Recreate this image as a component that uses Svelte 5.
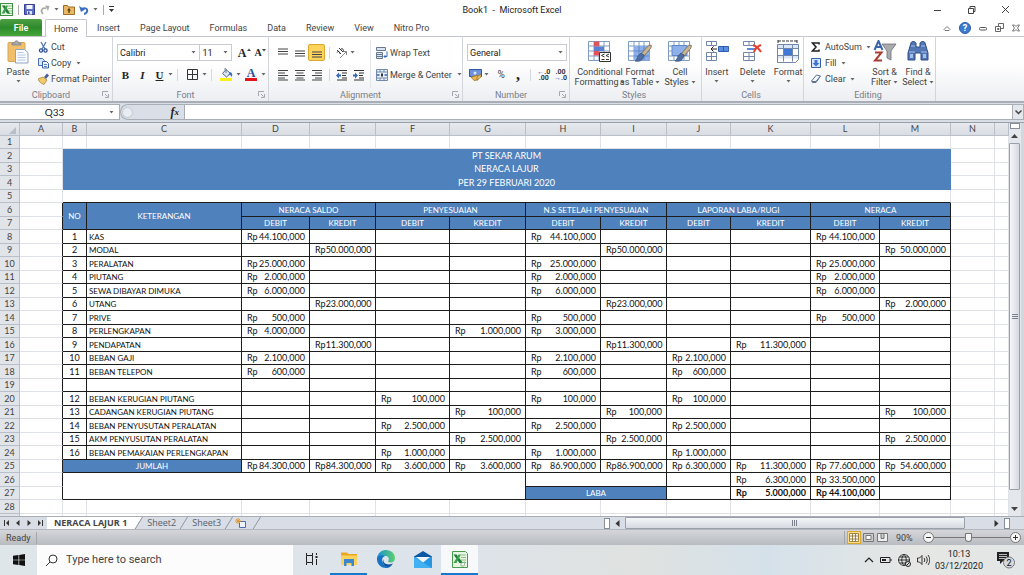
<script>
  const tabs = ['Insert', 'Page Layout', 'Formulas', 'Data', 'Review', 'View', 'Nitro Pro'];
  const letters = ['A', 'B', 'C', 'D', 'E', 'F', 'G', 'H', 'I', 'J', 'K', 'L', 'M', 'N', ''];
  const widths = [20, 43, 24, 155, 68, 66, 74, 76, 75, 66, 64, 80, 69, 71, 44];
  const groups = ['NERACA SALDO', 'PENYESUAIAN', 'N.S SETELAH PENYESUAIAN', 'LAPORAN LABA/RUGI', 'NERACA'];
  const titles = ['PT SEKAR ARUM', 'NERACA LAJUR', 'PER 29 FEBRUARI 2020'];
  const cols = ['D', 'E', 'F', 'G', 'H', 'I', 'J', 'K', 'L', 'M'];

  const entries = [
    { row: 8, no: 1, name: 'KAS', D: '44.100,000', H: '44.100,000', L: '44.100,000' },
    { row: 9, no: 2, name: 'MODAL', E: '50.000,000', I: '50.000,000', M: '50.000,000' },
    { row: 10, no: 3, name: 'PERALATAN', D: '25.000,000', H: '25.000,000', L: '25.000,000' },
    { row: 11, no: 4, name: 'PIUTANG', D: '2.000,000', H: '2.000,000', L: '2.000,000' },
    { row: 12, no: 5, name: 'SEWA DIBAYAR DIMUKA', D: '6.000,000', H: '6.000,000', L: '6.000,000' },
    { row: 13, no: 6, name: 'UTANG', E: '23.000,000', I: '23.000,000', M: '2.000,000' },
    { row: 14, no: 7, name: 'PRIVE', D: '500,000', H: '500,000', L: '500,000' },
    { row: 15, no: 8, name: 'PERLENGKAPAN', D: '4.000,000', G: '1.000,000', H: '3.000,000' },
    { row: 16, no: 9, name: 'PENDAPATAN', E: '11.300,000', I: '11.300,000', K: '11.300,000' },
    { row: 17, no: 10, name: 'BEBAN GAJI', D: '2.100,000', H: '2.100,000', J: '2.100,000' },
    { row: 18, no: 11, name: 'BEBAN TELEPON', D: '600,000', H: '600,000', J: '600,000' },
    { row: 19, no: '', name: '' },
    { row: 20, no: 12, name: 'BEBAN KERUGIAN PIUTANG', F: '100,000', H: '100,000', J: '100,000' },
    { row: 21, no: 13, name: 'CADANGAN KERUGIAN PIUTANG', G: '100,000', I: '100,000', M: '100,000' },
    { row: 22, no: 14, name: 'BEBAN PENYUSUTAN PERALATAN', F: '2.500,000', H: '2.500,000', J: '2.500,000' },
    { row: 23, no: 15, name: 'AKM PENYUSUTAN PERALATAN', G: '2.500,000', I: '2.500,000', M: '2.500,000' },
    { row: 24, no: 16, name: 'BEBAN PEMAKAIAN PERLENGKAPAN', F: '1.000,000', H: '1.000,000', J: '1.000,000' }
  ];
  const totals = {
    D: '84.300,000', E: '84.300,000', F: '3.600,000', G: '3.600,000', H: '86.900,000',
    I: '86.900,000', J: '6.300,000', K: '11.300,000', L: '77.600,000', M: '54.600,000'
  };
  const profit = { K: '6.300,000', L: '33.500,000' };
  const closing = { K: '5.000,000', L: '44.100,000' };

  let cellName = $state('Q33');
  let zoom = $state(45);
</script>

{#snippet arrow()}
  <svg class="arrow" width="5" height="3" viewBox="0 0 5 3" aria-hidden="true"><path d="M.5 0h4L2.500 2.500z" fill="#666" /></svg>
{/snippet}

{#snippet launcher()}
  <svg class="launcher" width="7" height="7" viewBox="0 0 7 7" aria-hidden="true"><path d="M.5 5V.5H6M3 3l2.500 2.500M6.500 3v3.500H3" fill="none" stroke="#a3a8b0" /></svg>
{/snippet}

{#snippet money(value)}
  {#if value}<div class="money"><span>Rp</span><span>{value}</span></div>{/if}
{/snippet}

{#snippet gridIcon()}
  <path d="M.5 1.500h21v19H.5z" fill="#fff" stroke="#7f9cc0" /><path d="M.5 6h21M.5 11h21M.5 16h21M6 1.500v19M11 1.500v19M16 1.500v19" stroke="#7f9cc0" fill="none" />
{/snippet}

{#snippet brush()}
  <path d="M23 5c1 1 0 2 0 3l-7 8-3-2 7-8z" fill="#c9b492" stroke="#6f5f49" stroke-width=".7" /><path d="M16 15l-3-2-3 3c-1 2-1 4-3 5 4 1 8 0 9-6z" fill="#4f6fa3" stroke="#2c4677" stroke-width=".6" />
{/snippet}

{#snippet bars(rows)}
  <svg width="12" height="12" viewBox="0 0 12 12" aria-hidden="true"><path d={rows} stroke="#444" stroke-width="1.200" fill="none" /></svg>
{/snippet}

<div class="app">
  <header class="title">
    <div class="quick">
      <svg width="13" height="13" viewBox="0 0 13 13"><rect x=".5" y=".5" width="12" height="12" fill="#eef7ea" stroke="#3f9142" /><path d="M8 3h4M8 5.500h4M8 8h4M8 10.500h4" stroke="#8bbf7d" /><path d="M2 2.500h3L10 10.500H7z" fill="#1f7a35" /><path d="M8 2.500H6L1.500 10.500h3z" fill="#3aa04d" /></svg>
      <i class="bar"></i>
      <button aria-label="Save"><svg width="11" height="11" viewBox="0 0 11 11"><path d="M.5.5h10v10h-10z" fill="#5b6fc4" stroke="#353f94" /><path d="M2.500 1h6v4h-6z" fill="#f4f7ff" /><path d="M3 7h5v3.500H3z" fill="#dde4f5" /><path d="M4 7.500h1.500v2.500H4z" fill="#353f94" /></svg></button>
      <button class="redo" aria-label="Redo"><svg width="10" height="10" viewBox="0 0 10 10"><path d="M3 9C0 6 2 2 6 3.500" fill="none" stroke="#aaa" stroke-width="1.800" /><path d="M5 0.500L9.500 1 8 6z" fill="#aaa" /></svg>{@render arrow()}</button>
      <button aria-label="Open"><svg width="12" height="11" viewBox="0 0 12 11"><path d="M.5 1.500h4l1 1.500h6v7.500H.5z" fill="#e9b864" stroke="#9b6c22" /><path d="M6 4l2 2.500H6.700V9H5.300V6.500H4z" fill="#5b3d10" /></svg></button>
      <button class="undo" aria-label="Undo"><svg width="10" height="10" viewBox="0 0 10 10"><path d="M5 9C10 8 9 1 3 4" fill="none" stroke="#3d6fc0" stroke-width="2" /><path d="M0 1l2 6 4-2.500z" fill="#3d6fc0" /></svg>{@render arrow()}</button>
      <i class="bar"></i>
      <svg width="5" height="7" viewBox="0 0 5 7"><path d="M0 .5h5" stroke="#333" /><path d="M0 3h5L2.500 6z" fill="#333" /></svg>
    </div>
    <h1>Book1 &nbsp;-&nbsp; Microsoft Excel</h1>
    <div class="window">
      <button aria-label="Minimize"><svg width="9" height="9" viewBox="0 0 9 9"><path d="M1 5.500h7" stroke="#444" /></svg></button>
      <button aria-label="Restore"><svg width="9" height="9" viewBox="0 0 9 9"><path d="M1.500 3.500h5v5h-5zM3 3.500v-2h5v5H6.500" fill="none" stroke="#444" /></svg></button>
      <button aria-label="Close"><svg width="9" height="9" viewBox="0 0 9 9"><path d="M1 1l7 7M8 1L1 8" stroke="#444" fill="none" /></svg></button>
    </div>
  </header>

  <nav class="tabs">
    <button class="file">File</button>
    <button class="home">Home</button>
    {#each tabs as tab}<button>{tab}</button>{/each}
    <div class="help">
      <svg width="8" height="8" viewBox="0 0 8 8"><path d="M1 5.500L4 2.500l3 3-1 1H2z" fill="#fff" stroke="#555" stroke-width=".8" /></svg>
      <button class="question" aria-label="Help">?</button>
      <svg width="8" height="8" viewBox="0 0 8 8"><rect x=".5" y="3.500" width="7" height="2.500" rx="1" fill="#fff" stroke="#555" /></svg>
      <svg width="9" height="9" viewBox="0 0 9 9"><path d="M3.500 4V.5h5v5H6M.5 3.500h5v5h-5zM2.500 5.500h1.500v1H2.500z" fill="none" stroke="#666" /></svg>
      <svg width="8" height="8" viewBox="0 0 8 8"><path d="M.5 1h2L4 2.500 5.500 1h2L5.500 4l2 3h-2L4 5.500 2.500 7h-2l2-3z" fill="#fff" stroke="#555" stroke-width=".8" /></svg>
    </div>
  </nav>

  <section class="ribbon">
    <div class="group">
      <div class="body">
        <button class="big"><svg width="22" height="24" viewBox="0 0 22 24"><rect x="1" y="2.500" width="17" height="19" rx="1" fill="#efbf6c" stroke="#d9a552" /><path d="M5 5V3h2.500c0-3 4-3 4 0H14v2z" fill="#a5a8ae" stroke="#7b7f86" stroke-width=".7" /><path d="M8.500 9.500h9l3.500 3v10.500H8.500z" fill="#f8fbff" stroke="#8fa4c2" /><path d="M10.500 12.500h6M10.500 15h8M10.500 17.500h8M10.500 20h8" stroke="#b9c8df" /></svg><span>Paste</span>{@render arrow()}</button>
        <div class="stack">
          <button><svg width="11" height="12" viewBox="0 0 11 12"><path d="M3 1l4 7M8 1L4 8" stroke="#5379b4" stroke-width="1.300" /><circle cx="3" cy="9.500" r="1.600" fill="none" stroke="#2c4f94" stroke-width="1.300" /><circle cx="7.500" cy="9.500" r="1.600" fill="none" stroke="#2c4f94" stroke-width="1.300" /></svg>Cut</button>
          <button><svg width="11" height="12" viewBox="0 0 11 12"><path d="M.5 1.500h4l2 2v5h-6z" fill="#dbe7fa" stroke="#4a71b4" /><path d="M4.500 4.500h4l2 2v4.500h-6z" fill="#eef4ff" stroke="#3860a8" /><path d="M6 7.500h3M6 9.500h3" stroke="#5b83c8" /></svg>Copy{@render arrow()}</button>
          <button><svg width="11" height="12" viewBox="0 0 11 12"><path d="M6 4l3-3.500 2 2L8 6z" fill="#4d5d99" /><path d="M0 6l5-2 4 3-3 4.500C4 11 1 9 0 6z" fill="#f0ca6b" stroke="#a67d2a" stroke-width=".7" /></svg>Format Painter</button>
        </div>
      </div>
      <footer><span>Clipboard</span>{@render launcher()}</footer>
    </div>

    <div class="group">
      <div class="body rows">
        <div class="line">
          <label class="pick font"><select aria-label="Font"><option>Calibri</option></select>{@render arrow()}</label>
          <label class="pick size"><select aria-label="Font size"><option>11</option></select>{@render arrow()}</label>
          <button class="serif grow" aria-label="Grow font">A<svg width="4" height="10" viewBox="0 0 4 10"><path d="M0 3l2-2.500L4 3z" fill="#444" /></svg></button>
          <button class="serif shrink" aria-label="Shrink font">A<svg width="4" height="10" viewBox="0 0 4 10"><path d="M0 1l2 2.500L4 1z" fill="#444" /></svg></button>
        </div>
        <div class="line second">
          <button class="serif mark">B</button><button class="serif mark it">I</button><button class="serif mark un">U</button>{@render arrow()}
          <i class="bar"></i>
          <button class="slot" aria-label="Borders"><svg width="11" height="11" viewBox="0 0 11 11"><path d="M.5.5h10v10h-10zM5.500.5v10M.5 5.500h10" fill="none" stroke="#333" /></svg></button>{@render arrow()}
          <i class="bar"></i>
          <button class="slot" aria-label="Fill color"><svg width="13" height="13" viewBox="0 0 13 13"><path d="M2.500 5.500L6 1.500l4.500 4-4 3.500z" fill="#dfe7f3" stroke="#53688b" /><path d="M6 5V1.500C6 0 4.500 0 4.500 1.500" fill="none" stroke="#53688b" stroke-width=".8" /><path d="M10 4c3 1 2.500 4 1.500 5C11 7 10 7 8.500 7z" fill="#3a6fc4" /><path d="M0 10h12v3H0z" fill="#f7ee1c" /></svg></button>{@render arrow()}
          <button class="slot serif color" aria-label="Font color"><span>A</span></button>{@render arrow()}
        </div>
      </div>
      <footer><span>Font</span>{@render launcher()}</footer>
    </div>

    <div class="group">
      <div class="body align">
        <div class="rows">
          <div class="line">
            <button class="cell" aria-label="Top align">{@render bars('M1 2h10M1 4.500h10M1 7h10')}</button>
            <button class="cell" aria-label="Middle align">{@render bars('M1 4h10M1 6.500h10M1 9h10')}</button>
            <button class="cell on" aria-label="Bottom align">{@render bars('M1 5h10M1 7.500h10M1 10h10')}</button>
            <i class="bar"></i>
            <button class="cell" aria-label="Orientation"><svg width="12" height="12" viewBox="0 0 12 12"><path d="M4 11l6-6M7 4.500h3.500V8" fill="none" stroke="#888" /><path d="M1 3l4 4M3 1l4 4M1 5.500c1-2 3-1 2.500 1M5 2c2-1 3 1 2 2.500" fill="none" stroke="#333" /></svg></button>{@render arrow()}
          </div>
          <div class="line second">
            <button class="cell" aria-label="Align left">{@render bars('M1 1.500h10M1 4h7M1 6.500h10M1 9h7M1 11h10')}</button>
            <button class="cell" aria-label="Center">{@render bars('M1 1.500h10M2.500 4h7M1 6.500h10M2.500 9h7M1 11h10')}</button>
            <button class="cell" aria-label="Align right">{@render bars('M1 1.500h10M4 4h7M1 6.500h10M4 9h7M1 11h10')}</button>
            <i class="bar"></i>
            <button class="cell" aria-label="Decrease indent"><svg width="12" height="12" viewBox="0 0 12 12"><path d="M1 1.500h10M6 4h5M6 6.500h4M6 9h5M1 11h10" stroke="#333" /><path d="M0 6.500l3-3v2h2v2H3v2z" fill="#3569b8" /></svg></button>
            <button class="cell" aria-label="Increase indent"><svg width="12" height="12" viewBox="0 0 12 12"><path d="M1 1.500h10M6 4h5M6 6.500h4M6 9h5M1 11h10" stroke="#333" /><path d="M5 6.500l-3-3v2H0v2h2v2z" fill="#3569b8" /></svg></button>
          </div>
        </div>
        <div class="rows wide">
          <div class="line"><button><svg width="12" height="12" viewBox="0 0 12 12"><path d="M.5.5h9v3h-9zM.5 5.500h6v6h-6z" fill="#dbe5f2" stroke="#66788f" /><path d="M1 7.500h5M1 9.500h5" stroke="#66788f" /><path d="M8 9.500h3v-5M9.500 8L8 9.500 9.500 11" fill="none" stroke="#3569b8" /></svg>Wrap Text</button></div>
          <div class="line second"><button><svg width="12" height="12" viewBox="0 0 12 12"><path d="M.5.5h11v11H.5zM.5 3h11M.5 9h11M4 .5V3M8 .5V3M4 9v2.500M8 9v2.500" fill="#eaf1fb" stroke="#7089ab" /><path d="M1 6h2.500M8.500 6H11" stroke="#2e62b5" stroke-width="1.500" /><path d="M5 4.500h2v3H5z" fill="#333" /></svg>Merge &amp; Center{@render arrow()}</button></div>
        </div>
      </div>
      <footer><span>Alignment</span>{@render launcher()}</footer>
    </div>

    <div class="group">
      <div class="body rows">
        <div class="line"><label class="pick number"><select aria-label="Number format"><option>General</option></select>{@render arrow()}</label></div>
        <div class="line second">
          <button class="cell" aria-label="Currency"><svg width="13" height="12" viewBox="0 0 13 12"><path d="M.5 .5h12v7H.5z" fill="#6f93da" stroke="#2f57a5" /><circle cx="6" cy="4" r="1.500" fill="#dce6fa" /><path d="M2 8l7-2v5l-4 .5z" fill="#e8b64c" stroke="#976b1c" stroke-width=".7" /><path d="M8 8l4-3v3l-4 3z" fill="#e9c468" stroke="#976b1c" stroke-width=".7" /></svg></button>{@render arrow()}
          <button class="cell pct">%</button>
          <button class="cell serif comma" aria-label="Comma style">,</button>
          <i class="bar"></i>
          <button class="cell tiny" aria-label="Increase decimal"><span><b>←</b>.0</span><span>.00</span></button>
          <button class="cell tiny" aria-label="Decrease decimal"><span>.00</span><span><b>→</b>.0</span></button>
        </div>
      </div>
      <footer><span>Number</span>{@render launcher()}</footer>
    </div>

    <div class="group">
      <div class="body bigs styles">
        <button class="big"><svg width="24" height="24" viewBox="0 0 24 24">{@render gridIcon()}<path d="M6 1.500h5v5H6zM6 11h5v4.500H6z" fill="#e0535b" /><path d="M6 6.500h10V11H6z" fill="#5a80d0" /><path d="M11.500 12.500h11v9h-11z" fill="#fff" stroke="#333" /><path d="M16.500 14l-3 1.500 3 1.500M13.500 19.500h3M21 14l-3 1.500 3 1.500M18 19.500h3" fill="none" stroke="#333" /></svg><span>Conditional</span><span>Formatting {@render arrow()}</span></button>
        <button class="big"><svg width="24" height="24" viewBox="0 0 24 24">{@render gridIcon()}<path d="M6 6h15.500v14.500H6z" fill="#8db0ea" /><path d="M6 11h15M6 16h15M11 6v14M16 6v14" stroke="#5f86c6" />{@render brush()}</svg><span>Format</span><span>as Table {@render arrow()}</span></button>
        <button class="big"><svg width="24" height="24" viewBox="0 0 24 24">{@render gridIcon()}<path d="M4 5.500h15v10H4z" fill="#8db0ea" stroke="#5f86c6" />{@render brush()}</svg><span>Cell</span><span>Styles {@render arrow()}</span></button>
      </div>
      <footer><span>Styles</span></footer>
    </div>

    <div class="group">
      <div class="body bigs cells">
        <button class="big"><svg width="24" height="24" viewBox="0 0 24 24"><path d="M1.500 1.500h10v4h-10zM1.500 12.500h10v8h-10zM6.500 1.500v4M6.500 12.500v8M1.500 16.500h10" fill="#fff" stroke="#7288a8" /><path d="M13.500 6.500h10v5h-10z" fill="#5b8de0" stroke="#2f5fae" /><path d="M18.500 6.500v5" stroke="#2f5fae" /><path d="M12 9H6M8.500 6.500L6 9l2.500 2.500" stroke="#222" fill="none" /></svg><span>Insert</span>{@render arrow()}</button>
        <button class="big"><svg width="24" height="24" viewBox="0 0 24 24"><path d="M2.500 1.500h11v4h-11zM2.500 12.500h11v8h-11zM8 1.500v4M8 12.500v8M2.500 16.500h11" fill="#fff" stroke="#7288a8" /><path d="M6 9h8" stroke="#5b8de0" stroke-width="2" /><path d="M12 5c3 1 6 4 8 7M20 5c-3 1-6 4-7 7" stroke="#e8402e" stroke-width="2" fill="none" /></svg><span>Delete</span>{@render arrow()}</button>
        <button class="big"><svg width="24" height="24" viewBox="0 0 24 24"><path d="M2 1h19M2 0v3M21 0v3" stroke="#333" stroke-dasharray="3 1" /><path d="M1.500 4.500h21v15l-3 3h-18z" fill="#fff" stroke="#7288a8" /><path d="M2 5h20v3.500H2zM2 15.500h20v3H2z" fill="#dbe6f6" /><path d="M1.500 8.500h21M1.500 15.500h21M7.500 4.500v17M16.500 4.500v17" stroke="#7288a8" /><path d="M8 9h8v6H8z" fill="#3f78d8" /></svg><span>Format</span>{@render arrow()}</button>
      </div>
      <footer><span>Cells</span></footer>
    </div>

    <div class="group">
      <div class="body">
        <div class="stack edit">
          <button><svg width="10" height="12" viewBox="0 0 10 12"><path d="M8 3.500V2H1.500L5 6 1.500 10H8V8.500" fill="none" stroke="#222" stroke-width="1.600" /></svg>AutoSum{@render arrow()}</button>
          <button><svg width="10" height="12" viewBox="0 0 10 12"><path d="M.5 1.500h9v9h-9z" fill="#dce8fb" stroke="#355fa8" /><path d="M3.500 3h3v3h2L5 9.500 1.500 6h2z" fill="#3f74d0" /></svg>Fill{@render arrow()}</button>
          <button><svg width="10" height="12" viewBox="0 0 10 12"><path d="M.5 8L5.500 2l4 1L5 9.500H1.500z" fill="#f4f7fc" stroke="#5b6f90" /><path d="M1 8.500h4L9 3.500" fill="none" stroke="#5b6f90" /></svg>Clear{@render arrow()}</button>
        </div>
        <div class="bigs">
          <button class="big"><svg width="24" height="24" viewBox="0 0 24 24"><path d="M1.500 10L5.500 1l4 9M3 7h5" fill="none" stroke="#3a64ae" stroke-width="2" /><path d="M2 12.500h6.500L2 20.500h7" fill="none" stroke="#a83d35" stroke-width="2" /><path d="M9 4h14l-5 7v9l-4-2v-7z" fill="#a9abad" stroke="#6e7073" stroke-width=".8" /></svg><span>Sort &amp;</span><span>Filter {@render arrow()}</span></button>
          <button class="big"><svg width="24" height="24" viewBox="0 0 24 24"><path d="M5 3c0-2 4-2 5 0v4h4V3c1-2 5-2 5 0l3 10v7h-7v-7h-6v7H2v-7z" fill="#5277b4" stroke="#2c4c86" /><path d="M5 6h4M15 6h4M3 12h6M15 12h6" stroke="#a9c2ea" /><path d="M4 14h3v4H4zM17 14h3v4h-3z" fill="#a6bfe8" /></svg><span>Find &amp;</span><span>Select {@render arrow()}</span></button>
        </div>
      </div>
      <footer><span>Editing</span></footer>
    </div>
  </section>

  <div class="formula">
    <div class="name"><input aria-label="Name box" bind:value={cellName} />{@render arrow()}</div>
    <div class="fx"><i></i><button class="serif" aria-label="Insert function">f<small>x</small></button></div>
    <input class="entry" aria-label="Formula bar" />
    <button class="expand" aria-label="Expand formula bar"><svg width="7" height="5" viewBox="0 0 7 5"><path d="M.5.5l3 3 3-3" fill="none" stroke="#444" stroke-width="1.500" /></svg></button>
  </div>

  <main>
    <div class="sheet">
      <table>
        <colgroup>{#each widths as w}<col style="width:{w}px" />{/each}<col /></colgroup>
        <thead>
          <tr><th class="corner"><svg width="7" height="7" viewBox="0 0 7 7"><path d="M7 0v7H0z" fill="#b8bec8" /></svg></th>{#each letters as l}<th>{l}</th>{/each}</tr>
        </thead>
        <tbody>
          <tr><th>1</th>{#each letters as _}<td></td>{/each}</tr>
          {#each titles as t, i}
            <tr><th>{i + 2}</th><td></td><td class="blue title-row" colspan="12">{t}</td><td></td><td></td></tr>
          {/each}
          <tr><th>5</th><td></td><td class="under" colspan="12"></td><td></td><td></td></tr>
          <tr><th>6</th><td class="edge"></td><td class="blue k" rowspan="2">NO</td><td class="blue k" rowspan="2">KETERANGAN</td>{#each groups as g}<td class="blue k" colspan="2">{g}</td>{/each}<td></td><td></td></tr>
          <tr><th>7</th><td class="edge"></td>{#each groups as _}<td class="blue k">DEBIT</td><td class="blue k">KREDIT</td>{/each}<td></td><td></td></tr>
          {#each entries as e}
            <tr><th>{e.row}</th><td class="edge"></td><td class="k mid">{e.no}</td><td class="k text">{e.name}</td>{#each cols as c}<td class="k">{@render money(e[c])}</td>{/each}<td></td><td></td></tr>
          {/each}
          <tr><th>25</th><td class="edge"></td><td class="blue k" colspan="2">JUMLAH</td>{#each cols as c}<td class="k">{@render money(totals[c])}</td>{/each}<td></td><td></td></tr>
          <tr><th>26</th><td class="edge"></td><td class="k" colspan="6" rowspan="2"></td><td class="k" colspan="2"></td>{#each cols.slice(6) as c}<td class="k">{@render money(profit[c])}</td>{/each}<td></td><td></td></tr>
          <tr class="strong"><th>27</th><td class="edge"></td><td class="blue k" colspan="2">LABA</td>{#each cols.slice(6) as c}<td class="k">{@render money(closing[c])}</td>{/each}<td></td><td></td></tr>
          <tr><th>28</th>{#each letters as _}<td></td>{/each}</tr>
          <tr><th></th>{#each letters as _}<td></td>{/each}</tr>
        </tbody>
      </table>
    </div>
    <div class="vscroll">
      <i class="split"></i>
      <svg width="7" height="4" viewBox="0 0 7 4"><path d="M0 4h7L3.500 0z" fill="#444" /></svg>
      <div class="thumb"><svg width="6" height="6" viewBox="0 0 6 6"><path d="M0 .5h6M0 2.500h6M0 4.500h6" stroke="#7c828c" /></svg></div>
      <svg width="7" height="4" viewBox="0 0 7 4"><path d="M0 0h7L3.500 4z" fill="#444" /></svg>
    </div>
  </main>

  <div class="sheetbar">
    <div class="navs">
      <svg width="6" height="6" viewBox="0 0 6 6"><path d="M.5 0v6" stroke="#333" /><path d="M5 0v6L2 3z" fill="#333" /></svg>
      <svg width="6" height="6" viewBox="0 0 6 6"><path d="M4.500 0v6L1 3z" fill="#333" /></svg>
      <svg width="6" height="6" viewBox="0 0 6 6"><path d="M1.500 0v6L5 3z" fill="#333" /></svg>
      <svg width="6" height="6" viewBox="0 0 6 6"><path d="M5.500 0v6" stroke="#333" /><path d="M1 0v6L4 3z" fill="#333" /></svg>
    </div>
    <button class="current">NERACA LAJUR 1</button>
    <svg class="slash" width="9" height="13" viewBox="0 0 9 13"><path d="M0 0h8L0 13z" fill="#fff" /><path d="M8.500 0L.5 13" stroke="#8f96a1" /></svg>
    <button>Sheet2</button>
    <svg class="slash" width="9" height="13" viewBox="0 0 9 13"><path d="M8.500 0L.5 13" stroke="#8f96a1" /></svg>
    <button>Sheet3</button>
    <svg class="slash" width="9" height="13" viewBox="0 0 9 13"><path d="M8.500 0L.5 13" stroke="#8f96a1" /></svg>
    <button class="new" aria-label="Insert worksheet"><svg width="12" height="11" viewBox="0 0 12 11"><path d="M4.500 3.500h6v6h-6z" fill="#eef3fb" stroke="#4c6cab" /><path d="M3 0v6M0 3h6M1 1l4 4M5 1L1 5" stroke="#e29a2e" /></svg></button>
    <svg class="slash" width="9" height="13" viewBox="0 0 9 13"><path d="M8.500 0L.5 13" stroke="#8f96a1" /></svg>
    <div class="hscroll">
      <i class="split"></i>
      <svg width="5" height="7" viewBox="0 0 5 7"><path d="M4.500 0v7L.5 3.500z" fill="#333" /></svg>
      <div class="thumb"><svg width="6" height="6" viewBox="0 0 6 6"><path d="M.5 0v6M2.500 0v6M4.500 0v6" stroke="#7c828c" /></svg></div>
      <svg class="far" width="5" height="7" viewBox="0 0 5 7"><path d="M.5 0v7l4-3.500z" fill="#333" /></svg>
      <i class="split"></i>
    </div>
  </div>

  <div class="status">
    <span class="ready">Ready</span>
    <div class="views">
      <button class="on" aria-label="Normal view"><svg width="10" height="9" viewBox="0 0 10 9"><path d="M.5.5h9v8h-9zM.5 3h9M.5 6h9M3.500.5v8M6.500.5v8" fill="#fff" stroke="#8a6a20" stroke-width=".8" /></svg></button>
      <button aria-label="Page layout view"><svg width="11" height="9" viewBox="0 0 11 9"><path d="M.5.5h10v8H.5z" fill="#ccc" stroke="#777" /><path d="M3 2.500h5v4H3z" fill="#fff" stroke="#777" /></svg></button>
      <button aria-label="Page break view"><svg width="11" height="9" viewBox="0 0 11 9"><path d="M.5.500h10v8H.5zM4 .5v5h3v-5" fill="#eee" stroke="#777" /></svg></button>
    </div>
    <span class="pct90">90%</span>
    <button class="round" aria-label="Zoom out"><svg width="11" height="11" viewBox="0 0 11 11"><circle cx="5.500" cy="5.500" r="5" fill="#f6f6f6" stroke="#777" /><path d="M3 5.500h5" stroke="#333" /></svg></button>
    <input type="range" aria-label="Zoom" min="0" max="100" bind:value={zoom} />
    <button class="round" aria-label="Zoom in"><svg width="11" height="11" viewBox="0 0 11 11"><circle cx="5.500" cy="5.500" r="5" fill="#f6f6f6" stroke="#777" /><path d="M3 5.500h5M5.500 3v5" stroke="#333" /></svg></button>
  </div>

  <footer class="taskbar">
    <button class="start" aria-label="Start"><svg width="12" height="12" viewBox="0 0 12 12"><path d="M0 1.800l5.500-.8v4.700H0zM6.200.9L12 0v5.700H6.200zM0 6.300h5.500V11L0 10.200zM6.200 6.300H12V12l-5.800-.9z" fill="#111" /></svg></button>
    <label class="search"><svg width="13" height="13" viewBox="0 0 13 13"><circle cx="8" cy="5" r="4" fill="none" stroke="#333" /><path d="M5 8L1 12" stroke="#333" /></svg><input type="search" aria-label="Search" placeholder="Type here to search" /></label>
    <button class="app-btn" aria-label="Task view"><svg width="13" height="12" viewBox="0 0 13 12"><path d="M1.500 0v2.500h6V0M1.500 12V9.500h6V12M1.500 2.500v7M7.500 2.500v7M11.500 0v2M11.500 6v6" fill="none" stroke="#222" /><path d="M10.500 3h2v2h-2z" fill="#222" /></svg></button>
    <button class="app-btn run" aria-label="File Explorer"><svg width="18" height="16" viewBox="0 0 18 16"><path d="M1 1.500h6l1.500 1.500H17v10H1z" fill="#e8a920" /><path d="M1 4.500h16v9.500H1z" fill="#fbd35c" /><path d="M4 8h10v7h-2.500v-3h-5v3H4z" fill="#3a86d0" /></svg></button>
    <button class="app-btn" aria-label="Edge"><svg width="18" height="18" viewBox="0 0 18 18"><defs><linearGradient id="edge" x1="0" x2="1"><stop offset="0" stop-color="#1d8fd8" /><stop offset="1" stop-color="#5cd06a" /></linearGradient></defs><path d="M0 8C1 2.500 5 0 9 0c5.500 0 9 4 9 8 0 3-2 4.500-4.500 4.500-2 0-3-1-2-2C12.500 8 11 6 8 6 4 6 1 7 0 8z" fill="url(#edge)" /><path d="M0 8c1-2.500 5-3.500 8-2C5 7 4.500 10 6 13c1.500 2.500 5 3.500 9 2-2 2.500-4 3-6 3-5 0-9.500-4-9-10z" fill="#1672c4" /><path d="M6.500 9c-1 4 3 7 9.500 4.500-2 3-6 4-8.500 1.500C5.500 13 5.500 11 6.500 9z" fill="#0b4c93" /></svg></button>
    <button class="app-btn" aria-label="Mail"><svg width="18" height="17" viewBox="0 0 18 17"><path d="M0 5.500L9 0l9 5.500v2H0z" fill="#0c59a4" /><path d="M0 6h18v11H0z" fill="#2797e4" /><path d="M2 6h14L9 11.500z" fill="#f3f8fd" /><path d="M0 6l9 5.500L18 17H0z" fill="#40b0f2" /></svg></button>
    <button class="app-btn run active" aria-label="Excel"><svg width="17" height="17" viewBox="0 0 17 17"><path d="M1.500.5h13l2 2v14h-15z" fill="#e9f5e4" stroke="#4a9a4c" /><path d="M10 4h5M10 6.500h5M10 9h5M10 11.500h5" stroke="#8cc283" /><path d="M2.500 3.500h3L12 12H8.500z" fill="#1d7a34" /><path d="M10 3.500H7.500L2.500 12h3z" fill="#3ea351" /><path d="M10 12l4-1-1 4h-3z" fill="#fff" stroke="#60a05e" stroke-width=".7" /></svg></button>
    <div class="tray">
      <svg width="10" height="10" viewBox="0 0 10 10"><path d="M1 7l4-4 4 4" fill="none" stroke="#222" stroke-width="1.200" /></svg>
      <svg width="12" height="8" viewBox="0 0 12 8"><path d="M.5 1.500h9.500v5H.5zM11 3v2" fill="none" stroke="#222" /><path d="M2 3h4v2H2z" fill="#222" /></svg>
      <svg width="13" height="13" viewBox="0 0 13 13"><path d="M6 .5a5.500 5.500 0 1 0 .1 0zM6 .5c-3 3-3 8 0 11M6 .5c3 3 3 8 0 11M.5 6h11M1.500 3h9M1.500 9h9" fill="none" stroke="#222" stroke-width=".9" /><circle cx="10" cy="10" r="2.500" fill="#e3e7ea" stroke="#222" /><path d="M8.500 11.500l3-3" stroke="#222" /></svg>
      <svg width="13" height="12" viewBox="0 0 13 12"><path d="M.5 4h2l2.500-2.500v9L2.500 8h-2zM7 4c1 1.300 1 2.700 0 4M9 2.500c1.700 2 1.700 5 0 7M11 1c2.300 3 2.300 7 0 10" fill="none" stroke="#222" stroke-width=".9" /></svg>
    </div>
    <div class="clock"><span>10:13</span><span>03/12/2020</span></div>
    <button class="notes" aria-label="Notifications"><svg width="20" height="18" viewBox="0 0 20 18"><path d="M1 1h12v9H7l-3 3v-3H1z" fill="#222" /><path d="M3 3.500h8M3 5.500h8M3 7.500h6" stroke="#dfe3e6" stroke-width=".8" /><circle cx="13" cy="11.500" r="5.500" fill="#d5d9dc" stroke="#777" /><text x="13" y="14.500" text-anchor="middle" font-size="9" fill="#111">2</text></svg></button>
  </footer>
</div>

<style>
  :global(body) { margin: 0; background: #fff; }
  .app {
    display: flex; flex-direction: column; height: 100vh; overflow: hidden;
    font: 9px/12px Roboto, "Open Sans", sans-serif; color: #444;
  }
  .app * { box-sizing: border-box; }
  button, input, select { font: inherit; color: inherit; background: none; border: 0; padding: 0; margin: 0; outline: 0; }
  button { display: flex; align-items: center; justify-content: center; white-space: nowrap; }
  svg { display: block; flex: none; }
  .bar { width: 1px; height: 12px; background: #d5d8dd; flex: none; }
  .serif { font-family: "Liberation Serif", serif; font-weight: bold; color: #222; }

  .title { display: grid; grid-template-columns: 1fr auto 1fr; align-items: center; height: 19px; flex: none; }
  .quick { display: flex; align-items: center; gap: 4px; height: 16px; }
  .quick button { gap: 6px; }
  .quick .bar { background: #aaa; height: 10px; margin: 0 1px; }
  .quick .redo { margin-left: 1px; gap: 4px; }
  .quick .undo { gap: 4px; }
  .title h1 { margin: 0; font: inherit; color: #222; }
  .window { display: flex; justify-content: flex-end; gap: 25px; padding-right: 14px; }

  .tabs { display: flex; height: 17px; flex: none; }
  .tabs > button { padding: 0 10px; }
  .tabs .file { width: 42px; padding: 0; margin-right: 3px; color: #fff; font-weight: 600; border-radius: 2px 2px 0 0; background: linear-gradient(#4f9f43, #2c8a2c 50%, #45a838); }
  .tabs .home { width: 42px; padding: 0; height: 18px; border: 1px solid #c3c7cd; border-bottom: 0; border-radius: 2px 2px 0 0; background: #fff; z-index: 1; }
  .help { margin-left: auto; display: flex; align-items: center; gap: 8px; padding-right: 4px; }
  .question { width: 12px; height: 12px; border-radius: 50%; background: #3c7bd0; border: 1px solid #2a5ba5; color: #fff; font-weight: bold; }

  .ribbon {
    display: grid; grid-template-columns: 113px 156px 194px 107px 132px 102px 132px 1fr; height: 67px; flex: none;
    border-top: 1px solid #c3c7cd; border-bottom: 2px solid #a9aeb6; background: linear-gradient(#fff 40%, #eceef2);
  }
  .group { display: flex; flex-direction: column; border-right: 1px solid #d2d6dc; min-width: 0; }
  .group > footer { display: flex; align-items: center; height: 13px; color: #777d88; padding-right: 3px; }
  .group > footer span { flex: 1; text-align: center; }
  .body { flex: 1; display: flex; padding-top: 3px; }
  .big { flex-direction: column; justify-content: flex-start; line-height: 10px; }
  .big > span { display: flex; align-items: center; gap: 2px; }
  .big > svg:first-child { margin-bottom: 3px; }
  .big > .arrow { margin-top: 3px; }
  .body > .big { width: 36px; }
  .stack { display: flex; flex-direction: column; gap: 4px; padding: 1px 0 0 2px; }
  .stack button { justify-content: flex-start; gap: 2px; height: 12px; }
  .stack button .arrow { margin-left: 3px; }
  .stack.edit { padding-left: 7px; width: 67px; gap: 4px; }
  .stack.edit button { gap: 4px; }
  .stack.edit button .arrow { margin-left: 0; }
  .bigs { display: flex; gap: 4px; }
  .bigs.styles { justify-content: flex-end; padding-right: 3px; }
  .bigs.cells { justify-content: center; gap: 6px; }
  .rows { display: flex; flex-direction: column; gap: 5px; padding-top: 7px; }
  .body.rows { padding-left: 4px; }
  .line { display: flex; align-items: center; height: 17px; }
  .pick { display: flex; align-items: center; height: 17px; border: 1px solid #c9cdd3; background: #fff; padding-right: 3px; color: #222; }
  .pick select { appearance: none; flex: 1; min-width: 0; padding-left: 2px; }
  .pick.font { width: 84px; }
  .pick.size { width: 32px; border-left: 0; }
  .pick.number { width: 100px; }
  .grow { font-size: 12px; margin-left: 4px; width: 16px; }
  .shrink { font-size: 10px; width: 16px; }
  .mark { width: 17px; font-size: 11px; }
  .it { font-style: italic; }
  .un { text-decoration: underline; }
  .second .bar { margin: 0 4px; }
  .slot { width: 20px; }
  .color span { font-size: 12px; line-height: 10px; width: 12px; color: #2b4f97; border-bottom: 3px solid #e3141b; }
  .align > .rows { width: 101px; padding: 4px 0 0 5px; }
  .align > .rows.wide { flex: 1; width: auto; border-left: 1px solid #e3e5e9; }
  .align { padding-top: 3px; }
  .align .bar { margin: 0 3px 0 4px; }
  .cell { width: 17px; height: 17px; }
  .cell.on { background: #fcd35c; border: 1px solid #d9a72e; border-radius: 2px; }
  .wide button { gap: 2px; }
  .wide .arrow { margin-left: 3px; }
  .pct { margin-left: 4px; font-size: 10px; }
  .comma { font-size: 16px; line-height: 8px; }
  .tiny { flex-direction: column; font-size: 7px; line-height: 6px; font-weight: bold; color: #333; }
  .tiny span { display: block; }
  .tiny b { color: #2e62b5; }

  .formula { display: flex; height: 20px; flex: none; padding: 1px 0 2px; background: #d9dde4; border-bottom: 1px solid #9ba1ab; }
  .name { display: flex; align-items: center; width: 120px; background: #fff; border: 1px solid #a9aeb6; border-left: 0; padding-right: 5px; }
  .name input { flex: 1; min-width: 0; text-align: center; color: #222; font-family: Lato, sans-serif; font-size: 10px; }
  .fx { width: 64px; display: flex; align-items: center; justify-content: space-between; padding-right: 5px; border: 1px solid #a9aeb6; border-width: 1px 0 1px 1px; border-radius: 8px 0 0 8px; background: #d9dee7; }
  .fx i { width: 11px; height: 11px; margin-left: 1px; border-radius: 50%; border: 1px solid #c4c9d1; background: #e9ecf1; }
  .fx button { font-style: italic; font-size: 12px; }
  .fx small { font-size: 9px; }
  .entry { flex: 1; min-width: 0; background: #fff; border: 1px solid #a9aeb6; }
  .expand { width: 11px; border: 1px solid #a9aeb6; border-left: 0; background: #e4e7ec; }

  main { flex: 1; min-height: 0; display: flex; }
  .sheet { flex: 1; min-width: 0; overflow: hidden; }
  table { width: 100%; table-layout: fixed; border-collapse: separate; border-spacing: 0; font: 9px/12px Lato, sans-serif; color: #111; }
  th { font-weight: normal; color: #444; padding: 0; background: #e1e4e9; border: 0 solid #b9bfc9; border-width: 0 1px 1px 0; }
  thead th { background: linear-gradient(#e6e9ed, #d9dde3); }
  .corner svg { margin: 2px 3px 0 auto; }
  td { padding: 0; border: 0 solid #dfe2e7; border-width: 0 1px 1px 0; white-space: nowrap; overflow: hidden; }
  tr { height: 12px; }
  tbody tr { height: 13px; }
  tbody tr:nth-child(even) { height: 14px; }
  .k { border-color: #1c1c1c; }
  .edge { border-right-color: #1c1c1c; }
  .under { border-bottom-color: #1c1c1c; }
  .blue { background: #4f81bd; color: #fff; text-align: center; font-weight: normal; }
  .blue.k, .text { font-size: 8px; }
  .title-row { border-color: #4f81bd; }
  .mid { text-align: center; }
  .text { padding-left: 2px; }
  .money { display: flex; justify-content: space-between; padding: 0 4px 0 5px; }
  .strong .money { font-weight: bold; }

  .vscroll { width: 15px; display: flex; flex-direction: column; align-items: center; gap: 5px; padding: 0 1px 5px 0; background: #e4e7ec; border-right: 3px solid #d3d8df; }
  .vscroll .split { width: 10px; height: 6px; border: 1px solid #888e98; background: #fff; }
  .vscroll .thumb { flex: 1; width: 11px; border: 1px solid #9aa0aa; border-radius: 1px; background: linear-gradient(90deg, #f4f6f8, #d6dae1); display: flex; align-items: center; justify-content: center; }
  .vscroll .thumb { margin-bottom: 12px; }

  .sheetbar { display: flex; align-items: stretch; height: 13px; flex: none; background: #d9dde5; border-top: 1px solid #a9aeb6; font-family: "Open Sans", sans-serif; }
  .navs { display: flex; align-items: center; gap: 5px; padding: 0 4px; width: 47px; }
  .sheetbar button { padding: 0 3px 0 4px; color: #5a6069; }
  .sheetbar .current { background: #fff; font-weight: bold; padding: 0 7px; color: #444; }
  .sheetbar .new { padding: 0 5px 0 2px; }
  .hscroll { margin-left: auto; width: 41%; display: flex; align-items: center; gap: 5px; padding-right: 14px; }
  .hscroll .split { width: 6px; height: 11px; border: 1px solid #888e98; background: #fff; }
  .hscroll .thumb { flex: 1; height: 12px; border: 1px solid #9aa0aa; border-radius: 1px; background: linear-gradient(#f4f6f8, #d6dae1); display: flex; align-items: center; justify-content: center; }
  .hscroll .far { margin-left: 24px; }

  .status { display: flex; align-items: center; height: 16px; flex: none; background: linear-gradient(#d4d6da, #b8bbc0); border-top: 1px solid #b3b6bb; padding-right: 3px; }
  .ready { width: 37px; padding-left: 6px; border-right: 1px solid #a3a6ab; }
  .views { display: flex; margin-left: auto; border-left: 1px solid #a3a6ab; padding-left: 2px; }
  .views button { width: 14px; height: 13px; }
  .views .on { background: #fde08a; border: 1px solid #d9a72e; }
  .pct90 { width: 34px; padding-left: 7px; }
  .status input { appearance: none; width: 76px; height: 11px; background: linear-gradient(#777, #777) center / 100% 1px no-repeat; }
  .status input::-webkit-slider-thumb { appearance: none; width: 7px; height: 9px; background: #f4f4f4; border: 1px solid #777; border-radius: 1px 1px 4px 4px; }

  .taskbar { display: flex; height: 30px; flex: none; background: linear-gradient(90deg, #dfe6ea, #dde3ea 45%, #dfe2e0 62%, #d5e1ea 75%, #e6e7e4 90%, #e2e6e6); color: #222; }
  .start { width: 37px; }
  .search { width: 256px; display: flex; align-items: center; gap: 8px; padding-left: 8px; background: #fcfcfc; }
  .search input { flex: 1; min-width: 0; font-size: 11px; }
  .search input::placeholder { color: #444; opacity: 1; }
  .app-btn { width: 37px; border-bottom: 2px solid transparent; }
  .run { border-bottom-color: #1a78cc; }
  .active { background: #f6f8f9; }
  .tray { display: flex; align-items: center; gap: 6px; margin-left: auto; }
  .clock { width: 58px; display: flex; flex-direction: column; justify-content: center; align-items: center; font-size: 9px; }
  .notes { width: 36px; }
</style>
